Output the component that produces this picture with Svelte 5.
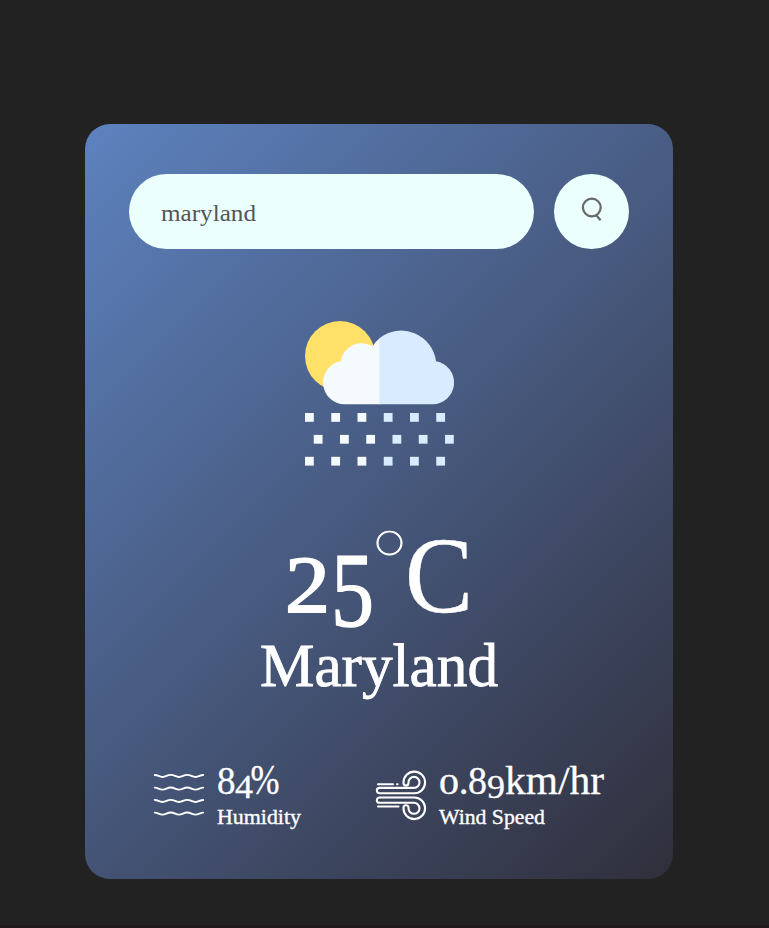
<script>
  const drops = [];
  for (let r = 0; r < 3; r++)
    for (let c = 0; c < 6; c++)
      drops.push({ x: c * 26.25 + (r === 1 ? 8.75 : 0), y: 92 + r * 21.9, light: c < 3 });
</script>

<main>
  <section class="card">
    <div class="search">
      <div class="field">
        <svg width="100" height="40" viewBox="0 0 100 40"><text x="0" y="26.5" font-size="24" textLength="95" lengthAdjust="spacingAndGlyphs">maryland</text></svg>
      </div>
      <button aria-label="Search">
        <svg width="22" height="25" viewBox="0 0 22 25" fill="none" stroke="#666968" stroke-width="2.2"><circle cx="10.8" cy="10.5" r="8.9" /><path d="M14.8 17.8L19.6 23.2" /></svg>
      </button>
    </div>
    <svg class="weather" width="149" height="145" viewBox="0 0 149 145">
      <circle cx="35" cy="35" r="35" fill="#ffe16a" />
      <path fill="#f5fafe" d="M39.5 83.3A21.75 21.75 0 0 1 35.7 40.2A21 21 0 0 1 67.5 25.3Q70.5 20.5 75 17V83.3Z" />
      <path fill="#d9ecff" d="M74.3 17.4A35 35 0 0 1 131 40.2A21.7 21.7 0 0 1 127.5 83.3H74.3Z" />
      {#each drops as d}
        <rect x={d.x} y={d.y} width="8.8" height="8.8" fill={d.light ? '#f5fafe' : '#d9ecff'} />
      {/each}
    </svg>
    <svg class="temp" width="190" height="110" viewBox="0 0 190 110">
      <text x="-1" y="88.5" font-size="81" textLength="45" lengthAdjust="spacingAndGlyphs" stroke="#fff" stroke-width="1.8">2</text>
      <text x="45" y="103" font-size="105" textLength="43" lengthAdjust="spacingAndGlyphs" stroke="#fff" stroke-width="1.4">5</text>
      <text class="degree" x="85" y="69.3" font-size="86" textLength="37" lengthAdjust="spacingAndGlyphs" stroke="#fff" stroke-width=".9">°</text>
      <text x="119" y="89" font-size="107" textLength="68" lengthAdjust="spacingAndGlyphs" stroke="#fff" stroke-width=".4">C</text>
    </svg>
    <svg class="city" width="238" height="70" viewBox="0 0 238 70"><text x="0" y="50" font-size="61" textLength="238" lengthAdjust="spacingAndGlyphs" stroke="#fff" stroke-width=".8">Maryland</text></svg>
    <div class="details">
      <div class="item humidity">
        <svg class="icon" width="50" height="50" viewBox="0 0 50 50" fill="none" stroke="#fff" stroke-width="1.9" stroke-linecap="round">
          {#each [4.7, 17.3, 29.7, 42.3] as y}
            <path d="M.8 {y - .7}C4 {y - .7} 5 {y + 1.3} 8.5 {y + 1.3}S13 {y - .8} 16.8 {y - .8}S21.5 {y + 1.3} 25 {y + 1.3}S29.5 {y - .8} 33.2 {y - .8}S38 {y + 1.3} 41.5 {y + 1.3}S46 {y - .7} 49.2 {y - .7}" />
          {/each}
        </svg>
        <svg width="100" height="74" viewBox="0 0 100 74">
          <text x="0" y="33.5" font-size="39" textLength="18.5" lengthAdjust="spacingAndGlyphs" stroke="#fff" stroke-width=".3">8</text>
          <text x="18" y="38" font-size="34" textLength="18" lengthAdjust="spacingAndGlyphs" stroke="#fff" stroke-width=".3">4</text>
          <text x="33.5" y="33.5" font-size="43" textLength="29" lengthAdjust="spacingAndGlyphs" stroke="#fff" stroke-width=".3">%</text>
          <text x="0" y="63.5" font-size="21" textLength="84" lengthAdjust="spacingAndGlyphs" stroke="#fff" stroke-width=".35">Humidity</text>
        </svg>
      </div>
      <div class="item">
        <svg class="icon" width="50" height="50" viewBox="0 0 50 50" fill="none" stroke="#fff" stroke-width="2.1" stroke-linecap="round" stroke-linejoin="round">
          <path d="M2 13.3H17M21 13.3H21.6M3.5 16.9H38A5.5 5.5 0 1 0 32.5 11.4V12A2.5 2.5 0 0 1 27.5 12V11.4A10.8 10.8 0 1 1 38 22.2H3.5A2.65 2.65 0 0 1 3.5 16.9Z" />
          <path d="M2 35.5H22.5M3.5 31.8H38A5.5 5.5 0 1 1 32.5 37.3V36.7A2.5 2.5 0 0 0 27.5 36.7V37.3A10.8 10.8 0 1 0 38 26.5H3.5A2.65 2.65 0 0 0 3.5 31.8Z" />
        </svg>
        <svg width="170" height="74" viewBox="0 0 170 74">
          <text x="0" y="33.5" font-size="29" textLength="20" lengthAdjust="spacingAndGlyphs" stroke="#fff" stroke-width=".3">0</text>
          <text x="20" y="33.5" font-size="37" stroke="#fff" stroke-width=".6">.</text>
          <text x="29" y="33.5" font-size="39" textLength="19" lengthAdjust="spacingAndGlyphs" stroke="#fff" stroke-width=".3">8</text>
          <text x="48" y="38" font-size="34" textLength="18" lengthAdjust="spacingAndGlyphs" stroke="#fff" stroke-width=".3">9</text>
          <text x="66" y="33.5" font-size="40" textLength="99" lengthAdjust="spacingAndGlyphs" stroke="#fff" stroke-width=".3">km/hr</text>
          <text x="0" y="63.5" font-size="21" textLength="106" lengthAdjust="spacingAndGlyphs" stroke="#fff" stroke-width=".35">Wind Speed</text>
        </svg>
      </div>
    </div>
  </section>
</main>

<style>
  :global(body) { margin: 0; background: #222; }
  main { box-sizing: border-box; height: 928px; padding: 124px 0 0 85px; border-bottom: 3px solid #201b1e; overflow: hidden; font-family: "Liberation Serif", serif; }
  .card { box-sizing: border-box; width: 588px; height: 755px; padding: 50px 44px 0; border-radius: 25px; background: linear-gradient(135deg, #5d82bf, #302f3b); display: flex; flex-direction: column; align-items: center; }
  svg { display: block; fill: #fff; flex: none; overflow: visible; }
  .search { width: 500px; display: flex; justify-content: space-between; }
  .field { box-sizing: border-box; width: 405px; height: 75px; padding: 20px 32px; border-radius: 38px; background: #ebfffc; }
  .field svg { fill: #555; }
  button { width: 75px; height: 75px; padding: 0 0 4px; border: 0; border-radius: 50%; background: #ebfffc; display: flex; align-items: center; justify-content: center; }
  button svg, .icon { fill: none; }
  .weather { margin-top: 72px; }
  .temp { margin-top: 57px; margin-left: 4px; }
  .degree { font-family: Lato, "Liberation Serif", serif; font-weight: 100; }
  .city { margin-top: 3px; }
  .details { width: 500px; margin-top: 54px; display: flex; }
  .item { display: flex; gap: 13px; }
  .humidity { width: 222px; margin-left: 25px; }
  .icon { margin-top: 11px; }
</style>
